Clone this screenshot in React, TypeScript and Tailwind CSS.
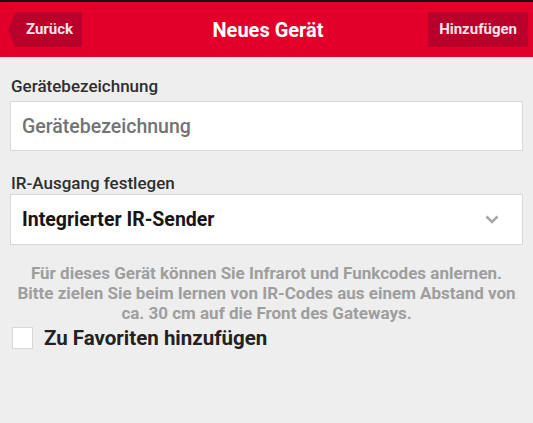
import { useState } from "react";

export default function App() {
  const [name, setName] = useState("");
  const [fav, setFav] = useState(false);

  return (
    <div className="min-h-[423px] w-full bg-[#eeeeee] font-['Roboto',sans-serif]">
      <div className="h-[2px] bg-[#1a0a0a]" />
      <header className="grid h-[55px] grid-cols-[1fr_auto_1fr] items-center bg-[#e2002b] pl-2 pr-[5px]">
        <div className="flex">
          <button className="flex h-[35px] items-center">
            <span className="h-0 w-0 border-y-[17.5px] border-r-[7px] border-y-transparent border-r-[#b8002b]" />
            <span className="flex h-[35px] items-center bg-[#b8002b] pl-[11px] pr-[9px] text-[15px] font-bold text-[#fbe5ea]">
              Zurück
            </span>
          </button>
        </div>
        <h1 className="text-[20px] font-bold text-white">Neues Gerät</h1>
        <div className="flex justify-end">
          <button className="flex h-[35px] items-center bg-[#b8002b] px-[11px] text-[15px] font-bold text-[#fbe5ea]">
            Hinzufügen
          </button>
        </div>
      </header>

      <div className="px-[10px] pt-[19px]">
        <label className="block pl-px text-[17px] font-medium leading-[20px] text-[#2e2e2e]">
          Gerätebezeichnung
        </label>
        <input
          value={name}
          onChange={(e) => setName(e.target.value)}
          placeholder="Gerätebezeichnung"
          className="mt-[5px] h-[50px] w-full border border-[#d8d8d8] bg-white px-[11px] text-[19.5px] font-medium text-[#333] placeholder:text-[#737373] focus:outline-none"
        />

        <label className="mt-[22px] block pl-px text-[17px] font-medium leading-[20px] text-[#2e2e2e]">
          IR-Ausgang festlegen
        </label>
        <div className="mt-[1px] flex h-[51px] items-center justify-between border border-[#d8d8d8] bg-white pl-[11px] pr-[23px]">
          <span className="text-[19.5px] font-bold text-[#161616]">Integrierter IR-Sender</span>
          <svg width="14" height="9" viewBox="0 0 14 9" fill="none">
            <path d="M1.5 1.5 7 7l5.5-5.5" stroke="#a8a8a8" strokeWidth="2.6" />
          </svg>
        </div>

        <p className="mt-[18px] text-center text-[17px] font-bold leading-[20px] text-[#9e9e9e]">
          Für dieses Gerät können Sie Infrarot und Funkcodes anlernen.
          <br />
          Bitte zielen Sie beim lernen von IR-Codes aus einem Abstand von
          <br />
          ca. 30 cm auf die Front des Gateways.
        </p>

        <label className="mt-[3px] flex h-[24px] items-center gap-[11px] pl-[2px]">
          <button
            onClick={() => setFav(!fav)}
            className="flex h-[22px] w-[21px] items-center justify-center border border-[#d8d8d8] bg-white"
          >
            {fav && <span className="h-[11px] w-[11px] bg-[#e2002b]" />}
          </button>
          <span className="text-[20.5px] font-bold text-[#222222]">Zu Favoriten hinzufügen</span>
        </label>
      </div>
    </div>
  );
}
